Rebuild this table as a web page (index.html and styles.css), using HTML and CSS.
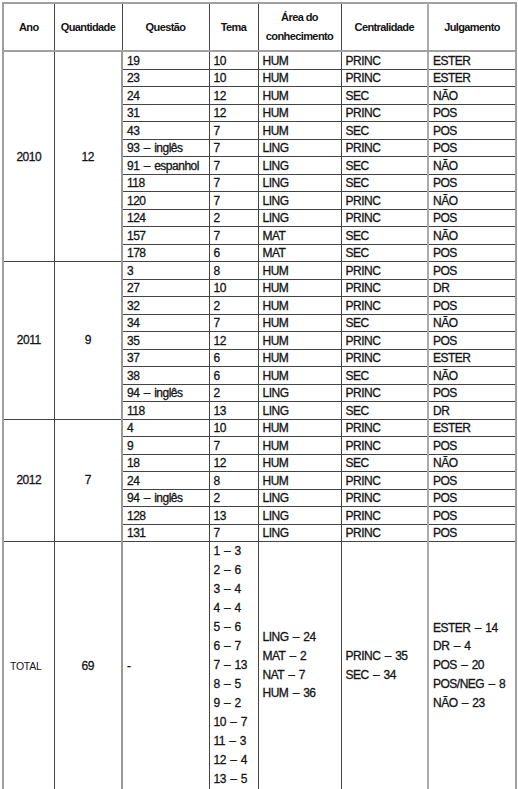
FILE: index.html
```html
<!DOCTYPE html>
<html lang="pt">
<head>
<meta charset="utf-8">
<link rel="stylesheet" href="styles.css">
</head>
<body>
<table class="tbl">
  <colgroup>
    <col class="c-ano"><col class="c-qtd"><col class="c-q"><col class="c-tema"><col class="c-area"><col class="c-cent"><col class="c-julg">
  </colgroup>
  <thead>
    <tr class="head">
      <th>Ano</th><th>Quantidade</th><th>Questão</th><th>Tema</th><th>Área do<br>conhecimento</th><th>Centralidade</th><th class="jl">Julgamento</th>
    </tr>
  </thead>
  <tbody>
    <tr><td class="grp" rowspan="12">2010</td><td class="grp ql" rowspan="12">12</td><td>19</td><td>10</td><td>HUM</td><td>PRINC</td><td class="jl">ESTER</td></tr>
    <tr><td>23</td><td>10</td><td>HUM</td><td>PRINC</td><td class="jl">ESTER</td></tr>
    <tr><td>24</td><td>12</td><td>HUM</td><td>SEC</td><td class="jl">NÃO</td></tr>
    <tr><td>31</td><td>12</td><td>HUM</td><td>PRINC</td><td class="jl">POS</td></tr>
    <tr><td>43</td><td>7</td><td>HUM</td><td>SEC</td><td class="jl">POS</td></tr>
    <tr><td>93 – inglês</td><td>7</td><td>LING</td><td>PRINC</td><td class="jl">POS</td></tr>
    <tr><td>91 – espanhol</td><td>7</td><td>LING</td><td>SEC</td><td class="jl">NÃO</td></tr>
    <tr><td>118</td><td>7</td><td>LING</td><td>SEC</td><td class="jl">POS</td></tr>
    <tr><td>120</td><td>7</td><td>LING</td><td>PRINC</td><td class="jl">NÃO</td></tr>
    <tr><td>124</td><td>2</td><td>LING</td><td>PRINC</td><td class="jl">POS</td></tr>
    <tr><td>157</td><td>7</td><td>MAT</td><td>SEC</td><td class="jl">NÃO</td></tr>
    <tr><td>178</td><td>6</td><td>MAT</td><td>SEC</td><td class="jl">POS</td></tr>

    <tr><td class="grp" rowspan="9">2011</td><td class="grp ql" rowspan="9">9</td><td>3</td><td>8</td><td>HUM</td><td>PRINC</td><td class="jl">POS</td></tr>
    <tr><td>27</td><td>10</td><td>HUM</td><td>PRINC</td><td class="jl">DR</td></tr>
    <tr><td>32</td><td>2</td><td>HUM</td><td>PRINC</td><td class="jl">POS</td></tr>
    <tr><td>34</td><td>7</td><td>HUM</td><td>SEC</td><td class="jl">NÃO</td></tr>
    <tr><td>35</td><td>12</td><td>HUM</td><td>PRINC</td><td class="jl">POS</td></tr>
    <tr><td>37</td><td>6</td><td>HUM</td><td>PRINC</td><td class="jl">ESTER</td></tr>
    <tr><td>38</td><td>6</td><td>HUM</td><td>SEC</td><td class="jl">NÃO</td></tr>
    <tr><td>94 – inglês</td><td>2</td><td>LING</td><td>PRINC</td><td class="jl">POS</td></tr>
    <tr><td>118</td><td>13</td><td>LING</td><td>SEC</td><td class="jl">DR</td></tr>

    <tr><td class="grp" rowspan="7">2012</td><td class="grp ql" rowspan="7">7</td><td>4</td><td>10</td><td>HUM</td><td>PRINC</td><td class="jl">ESTER</td></tr>
    <tr><td>9</td><td>7</td><td>HUM</td><td>PRINC</td><td class="jl">POS</td></tr>
    <tr><td>18</td><td>12</td><td>HUM</td><td>SEC</td><td class="jl">NÃO</td></tr>
    <tr><td>24</td><td>8</td><td>HUM</td><td>PRINC</td><td class="jl">POS</td></tr>
    <tr><td>94 – inglês</td><td>2</td><td>LING</td><td>PRINC</td><td class="jl">POS</td></tr>
    <tr><td>128</td><td>13</td><td>LING</td><td>PRINC</td><td class="jl">POS</td></tr>
    <tr><td>131</td><td>7</td><td>LING</td><td>PRINC</td><td class="jl">POS</td></tr>

    <tr class="total">
      <td class="grp total-label">TOTAL</td>
      <td class="grp ql">69</td>
      <td class="dash">-</td>
      <td class="temas">1 – 3<br>2 – 6<br>3 – 4<br>4 – 4<br>5 – 6<br>6 – 7<br>7 – 13<br>8 – 5<br>9 – 2<br>10 – 7<br>11 – 3<br>12 – 4<br>13 – 5</td>
      <td class="sum">LING – 24<br>MAT – 2<br>NAT – 7<br>HUM – 36</td>
      <td class="sum">PRINC – 35<br>SEC – 34</td>
      <td class="sum jl">ESTER – 14<br>DR – 4<br>POS – 20<br>POS/NEG – 8<br>NÃO – 23</td>
    </tr>
  </tbody>
</table>
</body>
</html>
```
FILE: styles.css
```css
html, body {
  margin: 0;
  padding: 0;
  background: #ffffff;
}
body {
  padding: 2px 0 0 2px;
}
.tbl {
  border-collapse: collapse;
  table-layout: fixed;
  width: 515px;
  font-family: "Liberation Sans", Arial, sans-serif;
  color: #141414;
  border: 2px solid #a0a0a0;
}
.c-ano { width: 51px; }
.c-qtd { width: 68px; }
.c-q { width: 87px; }
.c-tema { width: 49px; }
.c-area { width: 83px; }
.c-cent { width: 87px; }
.c-julg { width: 88px; }

th, td {
  border: 1px solid #444;
  padding: 0 0 0 4px;
  text-align: left;
  vertical-align: middle;
}
.head th {
  height: 46px;
  font-size: 11px;
  font-weight: bold;
  letter-spacing: -0.6px;
  text-align: center;
  padding: 0;
  line-height: 19px;
  border-bottom: 2px solid #a0a0a0;
}
tbody td {
  height: 15.5px;
  font-size: 12px;
  letter-spacing: -0.5px;
  word-spacing: 1.5px;
  -webkit-text-stroke: 0.3px #141414;
  line-height: 14px;
  padding-top: 1px;
}
td.grp {
  text-align: center;
  padding: 0;
  font-size: 12px;
}
.ql { border-right: 2px solid #999; }
.jl { border-left: 2px solid #aaa; }
.total td {
  height: 246px;
  padding-top: 0;
}
td.total-label {
  font-size: 10.5px;
  letter-spacing: -0.3px;
  padding-right: 6px;
  -webkit-text-stroke: 0;
}
.temas {
  line-height: 19px;
  vertical-align: top;
}
.sum {
  line-height: 18.8px;
}
.dash { padding-left: 4px; }
```
